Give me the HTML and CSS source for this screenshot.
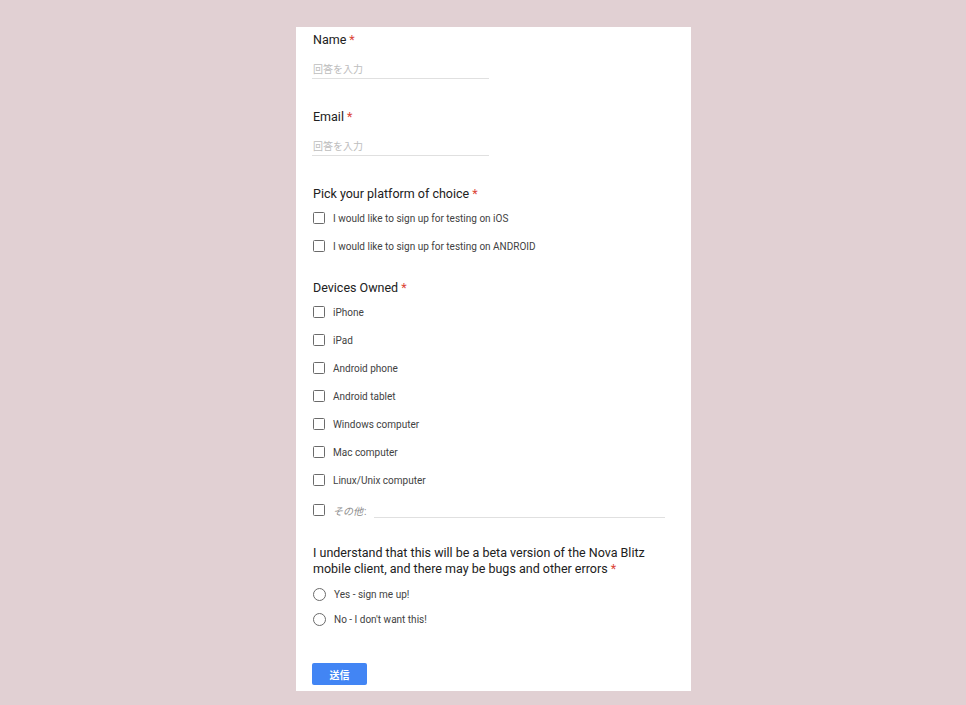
FILE: index.html
```html
<!DOCTYPE html>
<html lang="ja">
<head>
<meta charset="utf-8">
<title>Form</title>
<link rel="stylesheet" href="styles.css">
</head>
<body>
<main class="card">
  <section class="q q-text">
    <div class="q-title">Name<span class="req">*</span></div>
    <div class="text-input">回答を入力</div>
  </section>
  <section class="q q-text">
    <div class="q-title">Email<span class="req">*</span></div>
    <div class="text-input">回答を入力</div>
  </section>
  <section class="q q-platform">
    <div class="q-title">Pick your platform of choice<span class="req">*</span></div>
    <div class="options">
      <label class="opt"><span class="box"></span><span>I would like to sign up for testing on iOS</span></label>
      <label class="opt"><span class="box"></span><span>I would like to sign up for testing on ANDROID</span></label>
    </div>
  </section>
  <section class="q">
    <div class="q-title">Devices Owned<span class="req">*</span></div>
    <div class="options">
      <label class="opt"><span class="box"></span><span>iPhone</span></label>
      <label class="opt"><span class="box"></span><span>iPad</span></label>
      <label class="opt"><span class="box"></span><span>Android phone</span></label>
      <label class="opt"><span class="box"></span><span>Android tablet</span></label>
      <label class="opt"><span class="box"></span><span>Windows computer</span></label>
      <label class="opt"><span class="box"></span><span>Mac computer</span></label>
      <label class="opt"><span class="box"></span><span>Linux/Unix computer</span></label>
      <label class="opt opt-other"><span class="box"></span><span class="other-label">その他<span class="colon">:</span></span><span class="other-line"></span></label>
    </div>
  </section>
  <section class="q">
    <div class="q-title"><span class="line">I understand that this will be a beta version of the Nova Blitz</span><br><span class="line">mobile client, and there may be bugs and other errors</span><span class="req">*</span></div>
    <div class="options radios">
      <label class="opt radio-opt"><span class="radio"></span><span>Yes - sign me up!</span></label>
      <label class="opt radio-opt"><span class="radio"></span><span>No - I don't want this!</span></label>
    </div>
  </section>
  <div class="actions">
    <button class="submit" type="button">送信</button>
  </div>
</main>
</body>
</html>
```
FILE: styles.css
```css
* { box-sizing: border-box; }
html, body { margin: 0; padding: 0; }
body {
  background: #e1d0d3;
  font-family: Roboto, "Noto Sans CJK JP", sans-serif;
  color: #212121;
  width: 966px;
  height: 705px;
  overflow: hidden;
}
.card {
  width: 395px;
  height: 664px;
  margin: 27px 0 0 296px;
  background: #fff;
  padding: 5px 16px 0 16px;
  display: flex;
  flex-direction: column;
}
.q { margin-bottom: 19px; }
.q-text { margin-bottom: 30px; }
.q-platform { margin-bottom: 20px; }
.q-title {
  font-size: 12.5px;
  line-height: 16px;
  color: #212121;
  padding-left: 1px;
}
.req { color: #db4437; margin-left: 3px; }
.text-input {
  margin-top: 14px;
  width: 177px;
  height: 17px;
  border-bottom: 1px solid #e0e0e0;
  font-size: 10px;
  line-height: 16px;
  color: #bdbdbd;
  padding-left: 1px;
}
.options {
  margin-top: 2px;
  display: flex;
  flex-direction: column;
}
.opt {
  display: flex;
  align-items: center;
  height: 28px;
  font-size: 10px;
  color: #424242;
  gap: 8px;
  padding-left: 1px;
}
.box {
  width: 12px;
  height: 12px;
  border: 1.6px solid #6b6b6b;
  border-radius: 1.5px;
  flex: none;
}
.opt-other { height: 32px; }
.other-label { color: #8a8a8a; font-style: italic; flex: none; }
.colon { font-style: normal; margin-left: 1px; }
.other-line {
  flex: 1;
  align-self: center;
  margin-top: 14px;
  margin-right: 10px;
  height: 1px;
  background: #e0e0e0;
}
.radios { margin-top: 5px; }
.radio-opt { height: 25px; }
.radio {
  width: 13px;
  height: 13px;
  border: 1.4px solid #6b6b6b;
  border-radius: 50%;
  flex: none;
}
.actions { margin-top: 12px; }
.submit {
  width: 55px;
  height: 22px;
  background: #4285f4;
  color: #fff;
  border: none;
  border-radius: 2px;
  font-family: "Noto Sans CJK JP", sans-serif;
  font-weight: 700;
  font-size: 10px;
  padding: 0;
}
```
